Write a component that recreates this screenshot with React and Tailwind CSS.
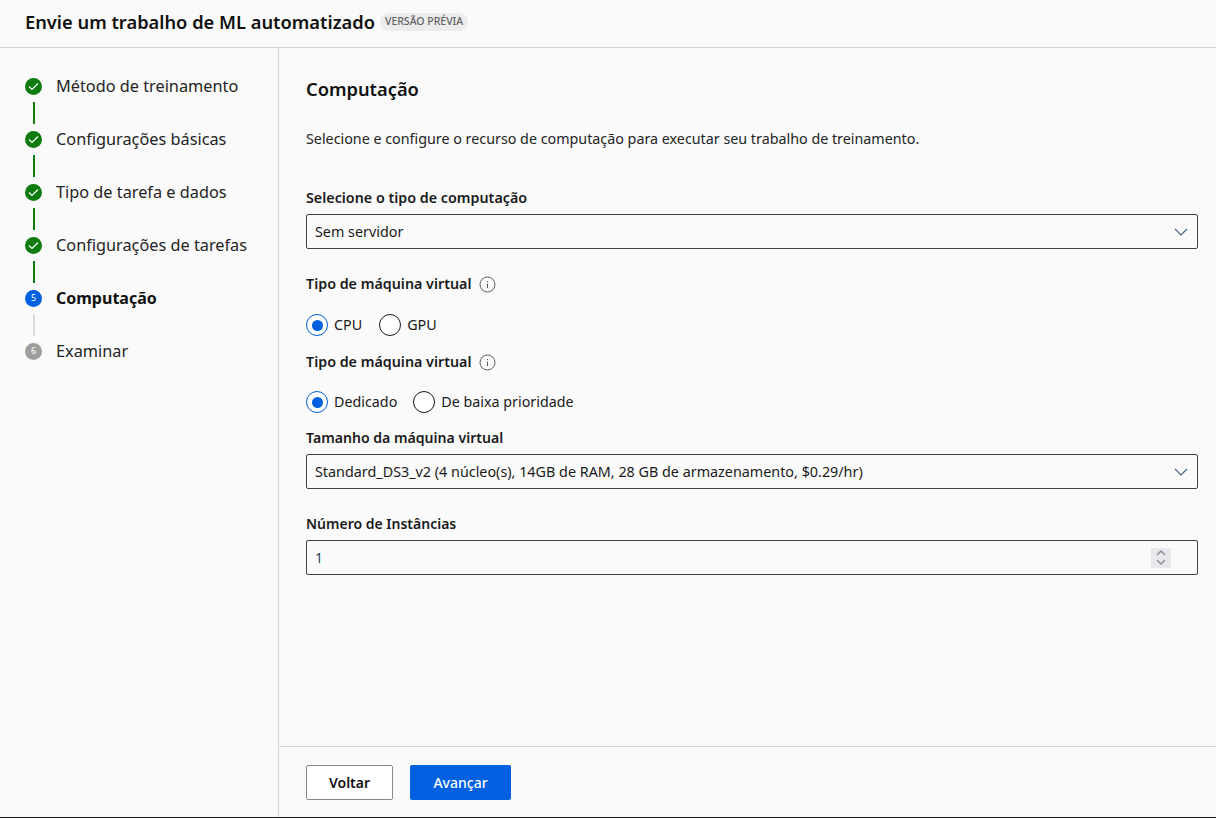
import React from 'react';

const font = "font-['Noto_Sans','Open_Sans',sans-serif]";

const steps = [
  { label: 'Método de treinamento', state: 'done' },
  { label: 'Configurações básicas', state: 'done' },
  { label: 'Tipo de tarefa e dados', state: 'done' },
  { label: 'Configurações de tarefas', state: 'done' },
  { label: 'Computação', state: 'active', n: 5 },
  { label: 'Examinar', state: 'todo', n: 6 },
];

const Chevron = () => (
  <svg width="14" height="8" viewBox="0 0 14 8" fill="none" stroke="#3f5f80" strokeWidth="1.1">
    <path d="M1 1l6 6 6-6" />
  </svg>
);

const Info = () => (
  <svg width="17" height="17" viewBox="0 0 17 17" fill="none" stroke="#5c5c5c" strokeWidth="1">
    <circle cx="8.5" cy="8.5" r="7.5" />
    <path d="M8.5 7.5v4.5" />
    <path d="M8.5 5v1" />
  </svg>
);

const StepIcon = ({ step }) => {
  if (step.state === 'done') {
    return (
      <div className="w-[17px] h-[17px] rounded-full bg-[#107c10] flex items-center justify-center">
        <svg width="11" height="9" viewBox="0 0 11 9" fill="none" stroke="#fff" strokeWidth="1.1">
          <path d="M1 4.5l3 3 6-6" />
        </svg>
      </div>
    );
  }
  return (
    <div className={`w-[17px] h-[17px] rounded-full flex items-center justify-center text-[9px] text-white ${step.state === 'active' ? 'bg-[#0060df]' : 'bg-[#9e9e9e]'}`}>
      {step.n}
    </div>
  );
};

const Radio = ({ label, checked }) => (
  <div className="flex items-center gap-[6px]">
    <div className={`w-[22px] h-[22px] rounded-full border flex items-center justify-center bg-white ${checked ? 'border-[#0060df]' : 'border-[#1a1a1a]'}`}>
      {checked && <div className="w-[11px] h-[11px] rounded-full bg-[#0060df]" />}
    </div>
    <span className="text-[14.3px] leading-[20px] text-[#1a1a1a]">{label}</span>
  </div>
);

const Select = ({ value }) => (
  <div className="h-[35px] border border-[#404040] rounded-[2px] flex items-center justify-between pl-[8px] pr-[9px]">
    <span className="pt-[1px] text-[14.35px] text-[#1a1a1a]">{value}</span>
    <Chevron />
  </div>
);

const Label = ({ children, className = 'text-[14.3px]' }) => (
  <div className={`leading-[20px] font-semibold text-[#1a1a1a] ${className}`}>{children}</div>
);

export default function App() {
  return (
    <div className={`${font} w-[1216px] h-[818px] bg-[#fafafa] flex flex-col text-[#1a1a1a] overflow-hidden`}>
      <header className="h-[48px] shrink-0 border-b border-[#d6d6d6] flex items-center pl-[25px] pb-[4px] gap-[5px]">
        <h1 className="text-[18.3px] font-semibold text-[#111]">Envie um trabalho de ML automatizado</h1>
        <span className="h-[18px] px-[5px] rounded-full bg-[#ececec] text-[10.5px] font-medium text-[#616161] flex items-center">VERSÃO PRÉVIA</span>
      </header>

      <div className="flex-1 flex min-h-0">
        <aside className="w-[279px] shrink-0 border-r border-[#d6d6d6] pl-[25px] pt-[28px]">
          {steps.map((step, i) => (
            <div key={step.label}>
              <div className="flex items-center gap-[14px] h-[20px]">
                <StepIcon step={step} />
                <span className={step.state === 'active' ? 'text-[16px] font-bold text-[#111]' : 'text-[16.3px] text-[#242424]'}>{step.label}</span>
              </div>
              {i < steps.length - 1 && (
                <div className={`w-[2px] h-[22px] ml-[8px] mt-[6px] mb-[5px] ${step.state === 'done' ? 'bg-[#107c10]' : 'bg-[#d9d9d9]'}`} />
              )}
            </div>
          ))}
        </aside>

        <main className="flex-1 flex flex-col min-w-0">
          <div className="flex-1 pl-[27px] pr-[18px] pt-[29px]">
            <h2 className="text-[18.3px] leading-[24px] font-semibold text-[#111]">Computação</h2>
            <p className="mt-[28px] text-[14.3px] leading-[20px] text-[#242424]">
              Selecione e configure o recurso de computação para executar seu trabalho de treinamento.
            </p>

            <div className="mt-[39px]"><Label>Selecione o tipo de computação</Label></div>
            <div className="mt-[6px]"><Select value="Sem servidor" /></div>

            <div className="mt-[25px] flex items-center gap-[7px]">
              <Label>Tipo de máquina virtual</Label>
              <Info />
            </div>
            <div className="mt-[20px] flex gap-[17px]">
              <Radio label="CPU" checked />
              <Radio label="GPU" />
            </div>

            <div className="mt-[16px] flex items-center gap-[7px]">
              <Label>Tipo de máquina virtual</Label>
              <Info />
            </div>
            <div className="mt-[19px] flex gap-[16px]">
              <Radio label="Dedicado" checked />
              <Radio label="De baixa prioridade" />
            </div>

            <div className="mt-[15px]"><Label className="text-[14.1px]">Tamanho da máquina virtual</Label></div>
            <div className="mt-[6px]">
              <Select value="Standard_DS3_v2 (4 núcleo(s), 14GB de RAM, 28 GB de armazenamento, $0.29/hr)" />
            </div>

            <div className="mt-[25px]"><Label className="text-[14px]">Número de Instâncias</Label></div>
            <div className="mt-[6px] h-[35px] border border-[#404040] rounded-[2px] flex items-center justify-between pl-[8px] pr-[26px]">
              <span className="text-[14px] text-[#1f3f66]">1</span>
              <div className="w-[20px] h-[20px] bg-[#e9e9ed] flex flex-col items-center justify-center gap-[3px]">
                <svg width="10" height="6" viewBox="0 0 10 6" fill="none" stroke="#8f8f9d" strokeWidth="1.5"><path d="M1 5l4-4 4 4" /></svg>
                <svg width="10" height="6" viewBox="0 0 10 6" fill="none" stroke="#8f8f9d" strokeWidth="1.5"><path d="M1 1l4 4 4-4" /></svg>
              </div>
            </div>
          </div>

          <footer className="h-[71px] shrink-0 border-t border-[#d6d6d6] flex items-center gap-[17px] pl-[27px]">
            <button className="w-[87px] h-[35px] pt-[1px] bg-white border border-[#8a8a8a] rounded-[2px] text-[14px] font-semibold text-[#111]">Voltar</button>
            <button className="w-[101px] h-[35px] pt-[1px] bg-[#0060df] rounded-[2px] text-[14px] font-medium text-white">Avançar</button>
          </footer>
        </main>
      </div>
      <div className="h-px shrink-0 bg-[#1a1a1a]" />
    </div>
  );
}
